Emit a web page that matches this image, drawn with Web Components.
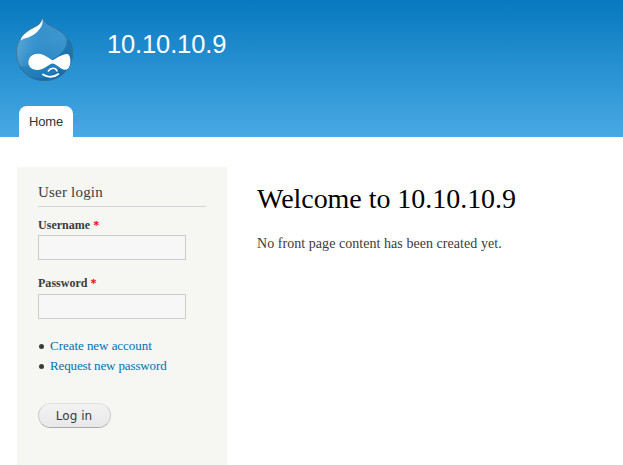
<!DOCTYPE html>
<html lang="en"><head><meta charset="utf-8"><title>Welcome to 10.10.10.9</title>
<style>
html,body{margin:0;height:465px;overflow:hidden;background:#fff}
body{font:14px/21px "Liberation Serif",serif;color:#3b3b3b}
</style></head><body><site-page></site-page>
<script>
const define=(name,html)=>customElements.define(name,class extends HTMLElement{
 constructor(){super();this.attachShadow({mode:'open'}).innerHTML=html;}
});
define('drop-logo',`<style>:host{display:block;width:60px;height:68px}svg{display:block}</style>
<svg width="60" height="68" viewBox="15 15 60 68">
<defs>
<linearGradient id="b" x1="0" y1="0" x2="0.3" y2="1"><stop offset="0" stop-color="#3a93cb"/><stop offset=".5" stop-color="#338fca"/><stop offset="1" stop-color="#1d78b5"/></linearGradient>
<linearGradient id="s" x1="0" y1=".4" x2="1" y2=".6"><stop offset="0" stop-color="#8ac8ec" stop-opacity=".5"/><stop offset=".5" stop-color="#4aa3da" stop-opacity=".1"/><stop offset="1" stop-color="#6ab4e2" stop-opacity=".25"/></linearGradient>
<clipPath id="c"><path d="M42.200 17C43.500 21.500 46 23.300 51 26C61 31 73 38 73 52.500C73 69 60.500 81 44.500 81C28.500 81 16 69 16 52.500C16 40 24 31.500 32.500 27.500C38.500 24.500 42 22.500 42.200 17Z"/></clipPath></defs>
<g clip-path="url(#c)">
<rect x="15" y="15" width="60" height="68" fill="url(#b)"/>
<path d="M43 17L56 28C69 36 68 47 60 54C52 62 35 68 18 66L14 40Z" fill="url(#s)"/>
<path d="M66 32C77 44 77 66 59 78C49 83 32 81 24 75C38 82 54 77 62 66C56 63 52 62 50 61C64 54 70 45 66 32Z" fill="#11659f" opacity=".5"/>
</g>
<path d="M42.200 17.500C43.500 21.500 46 23.300 51 26C61 31 72.500 38 72.500 52.500C72.500 69 60 80.500 44.500 80.500C28.500 80.500 16.500 69 16.500 52.500C16.500 40 24 31.500 32.500 27.500C38.500 24.500 42 22.500 42.200 17.500Z" fill="none" stroke="#34708f" stroke-width="1" opacity=".85"/>
<path d="M42.400 18.500C43 22.500 42.500 25 40 28.500C36 34 30.500 37 25.500 38.300C22.500 39 21.500 40 20.800 40.500C21 36.500 26.500 32 33 28.500C37.500 26 41.500 24 42.400 18.500Z" fill="#fff"/>
<path d="M38 53.800C43 53.600 47.500 57.500 52.500 60.300C57 58 63 53.500 67.500 54C71.500 55 72 69 65.500 69.800C61 70.200 57.500 64.500 53 63.500C49 63.300 45.500 69.500 38 70C25 70.500 25.500 54 38 53.800Z" fill="#fff"/>
<path d="M48.300 71C50.500 67.500 55.500 67 57 71" fill="none" stroke="#fff" stroke-width="1.500" stroke-linecap="round"/>
<path d="M43 74.600C47.500 77.800 54 77.500 58.300 74" fill="none" stroke="#fff" stroke-width="1.900" stroke-linecap="round"/>
</svg>`);
define('nav-tab',`<style>:host{display:block;box-sizing:border-box;width:54px;height:31px;padding:0 0 0 10px;background:#fff;border-radius:8px 8px 0 0;font:13px/31px "Liberation Sans",sans-serif;letter-spacing:-.15px;color:#333}</style><slot></slot>`);
define('site-header',`<style>
:host{display:flex;flex-direction:column;justify-content:space-between;height:137px;background:linear-gradient(#0779bf,#48a9e4)}
.brand{display:flex;padding:15px 0 0 15px;gap:32px}
h1{margin:14px 0 0;font:25.5px/30px "Liberation Sans",sans-serif;letter-spacing:-.13px;color:#fffeff}
nav{padding-left:19px}
</style><div class="brand"><drop-logo></drop-logo><h1><slot></slot></h1></div><nav><nav-tab>Home</nav-tab></nav>`);
define('form-field',`<style>:host{display:block}
label{display:block;font-weight:bold;font-size:12px;line-height:18px;letter-spacing:.03px}
b{color:red}input{display:block;box-sizing:border-box;width:148px;height:25px;margin:var(--input-gap,1px) 0 0;padding:2px;border:1px solid #ccc;border-radius:0;background:#f7f7f7;outline:0}
</style><label><slot></slot> <b>*</b></label><input aria-label="field">`);
define('login-block',`<style>
:host{display:block;box-sizing:border-box;width:210px;height:298px;padding:15px 21px 0;background:#f6f6f2}
h2{margin:0 0 9px;height:24px;border-bottom:1px solid #d3d3d3;font:15px/20px "Liberation Serif",serif;letter-spacing:.2px;color:#3b3b3b}
form-field+form-field{margin-top:14px;--input-gap:2px}
ul{list-style:none;margin:17px 0 0;padding:0;font-size:13px;line-height:20px;color:#0071b3}
li{display:flex;align-items:center;letter-spacing:-.04px}
li+li{letter-spacing:-.13px}
li::before{content:"";width:5px;height:5px;margin:0 6px 0 1px;border-radius:50%;background:#3b3b3b}
button{display:block;box-sizing:border-box;width:73px;height:25px;margin:27px 0 0;padding:0 1px 0 0;border:1px solid #ccc;border-color:#e0e0e0 #ccc #aaa;border-radius:13px;background:linear-gradient(#f3f3f3,#e8e8e8);font:12px/22px "DejaVu Sans",sans-serif;letter-spacing:.05px;color:#3a3a3a}
</style><h2>User login</h2><form-field>Username</form-field><form-field>Password</form-field>
<ul><li>Create new account</li><li>Request new password</li></ul><button>Log in</button>`);
define('page-content',`<style>:host{display:block;padding-top:15px}
h1{margin:0 0 17px;font:28px/34px "Liberation Serif",serif;letter-spacing:-.04px;color:#000}p{margin:0;letter-spacing:.05px}
</style><h1><slot name="title"></slot></h1><p><slot></slot></p>`);
define('site-page',`<style>:host{display:block}main{display:flex;gap:30px;padding:30px 0 0 17px}</style>
<site-header>10.10.10.9</site-header><main><login-block></login-block><page-content><span slot="title">Welcome to 10.10.10.9</span>No front page content has been created yet.</page-content></main>`);
</script></body></html>
